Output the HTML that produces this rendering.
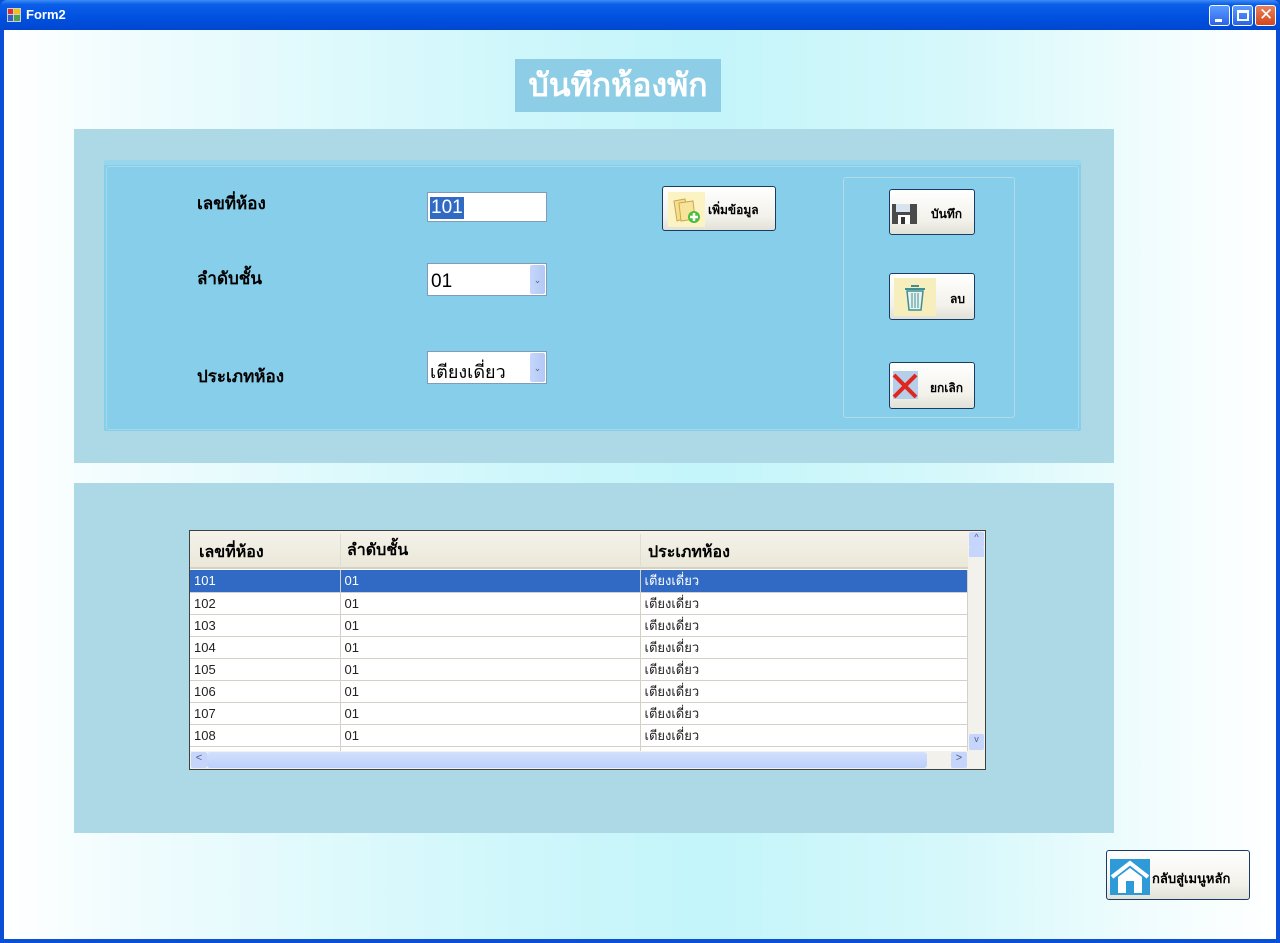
<!DOCTYPE html>
<html><head><meta charset="utf-8">
<style>
*{margin:0;padding:0;box-sizing:border-box}
body{width:1280px;height:943px;overflow:hidden;position:relative;font-family:"Liberation Sans","DejaVu Sans",sans-serif;background:#0a4fd6}
.a{position:absolute}
#title{left:0;top:0;width:1280px;height:30px;background:linear-gradient(#3d8cf5 0%,#0a5ee8 15%,#0050e0 60%,#0047d0 100%);border-radius:7px 7px 0 0}
#title span{position:absolute;left:26px;top:7px;color:#fff;font-weight:bold;font-size:13px}
#client{left:4px;top:30px;width:1272px;height:909px;background:linear-gradient(90deg,#ffffff 0%,#f0fcfe 10%,#cff7fb 40%,#c3f5fa 55%,#d6f8fb 75%,#f4fdfe 92%,#ffffff 100%)}
.tb{width:21px;height:21px;top:5px;border:1px solid #fff;border-radius:3px;background:linear-gradient(#5b9bff,#2a64e8)}
.lbl{font-weight:bold;font-size:17px;color:#000}
.btn{background:linear-gradient(#ffffff,#f2f1ea 70%,#e2e1d8);border:1px solid #1c3b64;border-radius:3px}
.btxt{font-weight:bold;font-size:12px;color:#000;position:absolute}
.cb{background:#fff;border:1px solid #7f9db9}
.dd{position:absolute;right:1px;top:1px;bottom:1px;width:15px;background:linear-gradient(90deg,#c5d6fb,#b3c8f5);border-radius:2px;color:#4d6185;font-size:9px;text-align:center}
table{border-collapse:collapse;font-size:13px}
td{height:22px;border-bottom:1px solid #d4d0c8;border-right:1px solid #d4d0c8;padding-left:4px;color:#222}
</style></head><body>
<div class="a" id="title"><svg class="a" style="left:7px;top:8px" width="14" height="14"><rect x="0" y="0" width="14" height="14" fill="#d2d0c5"/><rect x="1" y="1" width="5" height="5" fill="#e03030"/><rect x="7" y="1" width="6" height="5" fill="#f0c020"/><rect x="1" y="7" width="5" height="6" fill="#3060d0"/><rect x="7" y="7" width="6" height="6" fill="#50a050"/></svg><span>Form2</span>
<div class="a tb" style="left:1209px"><div class="a" style="left:5px;top:13px;width:7px;height:3px;background:#fff"></div></div>
<div class="a tb" style="left:1232px"><div class="a" style="left:4px;top:4px;width:12px;height:11px;border:2px solid #fff;border-top-width:3px"></div></div>
<div class="a tb" style="left:1255px;background:linear-gradient(#e8825e,#d2461c)"><div class="a" style="left:3px;top:-1px;color:#fff;font-size:17px;font-weight:bold">✕</div></div>
</div>
<div class="a" id="client"></div>
<div class="a" style="left:515px;top:59px;width:206px;height:53px;background:#8ecde6;color:#fff;font-weight:bold;font-size:32px;text-align:center;line-height:53px">บันทึกห้องพัก</div>
<div class="a" style="left:74px;top:129px;width:1040px;height:334px;background:#add8e6"></div>
<div class="a" style="left:104px;top:160px;width:977px;height:271px;background:#87ceeb;border-top:5px solid #98d6ee;border-radius:2px"></div>
<div class="a" style="left:106px;top:166px;width:973px;height:264px;border:1px solid #a6d8ec;border-radius:3px"></div>
<div class="a lbl" style="left:197px;top:190px">เลขที่ห้อง</div>
<div class="a lbl" style="left:197px;top:265px">ลำดับชั้น</div>
<div class="a lbl" style="left:197px;top:363px">ประเภทห้อง</div>
<div class="a cb" style="left:427px;top:192px;width:120px;height:30px"><span class="a" style="left:2px;top:4px;background:#316ac5;color:#fff;font-size:19px;padding:0 1px;line-height:22px">101</span></div>
<div class="a cb" style="left:427px;top:263px;width:120px;height:33px"><span class="a" style="left:3px;top:7px;font-size:19px">01</span><div class="dd" style="line-height:30px">&#8964;</div></div>
<div class="a cb" style="left:427px;top:351px;width:120px;height:33px"><span class="a" style="left:2px;top:5px;font-size:18px">เตียงเดี่ยว</span><div class="dd" style="line-height:30px">&#8964;</div></div>
<div class="a btn" style="left:662px;top:186px;width:114px;height:45px">
<div class="a" style="left:5px;top:5px;width:37px;height:35px;background:#fbf3c4"></div>
<svg class="a" style="left:8px;top:8px" width="32" height="30"><path d="M3 6 L14 4 L17 22 L6 26 Z" fill="#f6de8c" stroke="#c9a950"/><path d="M8 8 L22 6 L24 24 L10 26 Z" fill="#f8e39a" stroke="#c9a950"/><circle cx="23" cy="22" r="6" fill="#4cbf3a"/><path d="M23 18v8M19 22h8" stroke="#fff" stroke-width="2.5"/></svg>
<span class="btxt" style="left:45px;top:14px">เพิ่มข้อมูล</span></div>
<div class="a" style="left:843px;top:177px;width:172px;height:241px;border:1px solid #b3dce8;border-radius:3px"></div>
<div class="a btn" style="left:889px;top:189px;width:86px;height:46px">
<svg class="a" style="left:2px;top:12px" width="26" height="22"><rect x="0" y="2" width="25" height="20" fill="#4a4a4a"/><rect x="4" y="2" width="14" height="8" fill="#d8e3f0"/><rect x="6" y="13" width="12" height="9" fill="#fff"/><rect x="9" y="15" width="4" height="7" fill="#333"/></svg>
<span class="btxt" style="left:41px;top:15px">บันทึก</span></div>
<div class="a btn" style="left:889px;top:273px;width:86px;height:47px">
<div class="a" style="left:4px;top:4px;width:42px;height:38px;background:#f6efbd"></div>
<svg class="a" style="left:12px;top:8px" width="26" height="30"><path d="M3 7h20M9 4h8" stroke="#3f8f95" stroke-width="2" fill="none"/><path d="M5 9 L7 28 H19 L21 9 Z" fill="#e8f2ee" stroke="#3f8f95" stroke-width="1.5"/><path d="M10 11v15M13 11v15M16 11v15" stroke="#3f8f95"/></svg>
<span class="btxt" style="left:60px;top:16px">ลบ</span></div>
<div class="a btn" style="left:889px;top:362px;width:86px;height:47px">
<div class="a" style="left:3px;top:8px;width:25px;height:28px;background:#b6cfe8"></div>
<svg class="a" style="left:1px;top:9px" width="28" height="28"><path d="M3 3 L25 25 M25 3 L3 25" stroke="#e0261e" stroke-width="4"/></svg>
<span class="btxt" style="left:40px;top:16px">ยกเลิก</span></div>
<div class="a" style="left:74px;top:483px;width:1040px;height:350px;background:#add8e6"></div>
<div class="a" style="left:189px;top:530px;width:797px;height:240px;background:#fff;border:1px solid #404040;overflow:hidden">
<div class="a" style="left:0;top:0;width:778px;height:38px;background:linear-gradient(#f4f2ea,#ebe8d9);border-bottom:2px solid #d6d2c2"></div>
<div class="a lbl" style="left:9px;top:9px;font-size:16px">เลขที่ห้อง</div>
<div class="a lbl" style="left:157px;top:7px;font-size:16px">ลำดับชั้น</div>
<div class="a lbl" style="left:458px;top:9px;font-size:16px">ประเภทห้อง</div>
<div class="a" style="left:150px;top:3px;width:1px;height:32px;background:#e0ddd0"></div>
<div class="a" style="left:450px;top:3px;width:1px;height:32px;background:#e0ddd0"></div>
<table class="a" style="left:0;top:39px;width:778px">
<colgroup><col style="width:150px"><col style="width:300px"><col></colgroup>
<tr style="background:#316ac5"><td style="color:#fff">101</td><td style="color:#fff">01</td><td style="color:#fff">เตียงเดี่ยว</td></tr>
<tr><td>102</td><td>01</td><td>เตียงเดี่ยว</td></tr>
<tr><td>103</td><td>01</td><td>เตียงเดี่ยว</td></tr>
<tr><td>104</td><td>01</td><td>เตียงเดี่ยว</td></tr>
<tr><td>105</td><td>01</td><td>เตียงเดี่ยว</td></tr>
<tr><td>106</td><td>01</td><td>เตียงเดี่ยว</td></tr>
<tr><td>107</td><td>01</td><td>เตียงเดี่ยว</td></tr>
<tr><td>108</td><td>01</td><td>เตียงเดี่ยว</td></tr>
<tr><td></td><td></td><td></td></tr>
</table>
<div class="a" style="left:778px;top:0;width:17px;height:220px;background:#f3f1ec"><div class="a" style="left:1px;top:1px;width:15px;height:16px;background:#c5d5fb;border-radius:2px;font-size:9px;color:#4d6185;text-align:center">^</div><div class="a" style="left:1px;top:17px;width:15px;height:9px;background:#c5d5fb"></div><div class="a" style="left:1px;bottom:1px;width:15px;height:16px;background:#c5d5fb;border-radius:2px;font-size:9px;color:#4d6185;text-align:center">v</div></div>
<div class="a" style="left:0;top:220px;width:795px;height:18px;background:#f3f1ec"><div class="a" style="left:1px;top:1px;width:16px;height:16px;background:#c5d5fb;border-radius:2px;font-size:11px;color:#4d6185;text-align:center">&lt;</div><div class="a" style="left:17px;top:1px;width:720px;height:16px;background:linear-gradient(#d3e0fd,#bccffa);border-radius:3px"></div><div class="a" style="left:761px;top:1px;width:16px;height:16px;background:#c5d5fb;border-radius:2px;font-size:11px;color:#4d6185;text-align:center">&gt;</div></div>
</div>
<div class="a btn" style="left:1106px;top:850px;width:144px;height:50px">
<svg class="a" style="left:3px;top:8px" width="40" height="36"><rect x="0" y="0" width="40" height="36" fill="#2f9ad8"/><path d="M2 18 L20 4 L38 18" stroke="#fff" stroke-width="4" fill="none"/><path d="M8 18 L20 9 L32 18 V34 H8 Z" fill="#fff"/><rect x="16" y="22" width="8" height="12" fill="#2f9ad8"/></svg>
<span class="btxt" style="left:45px;top:17px;font-size:13px">กลับสู่เมนูหลัก</span></div>
</body></html>
